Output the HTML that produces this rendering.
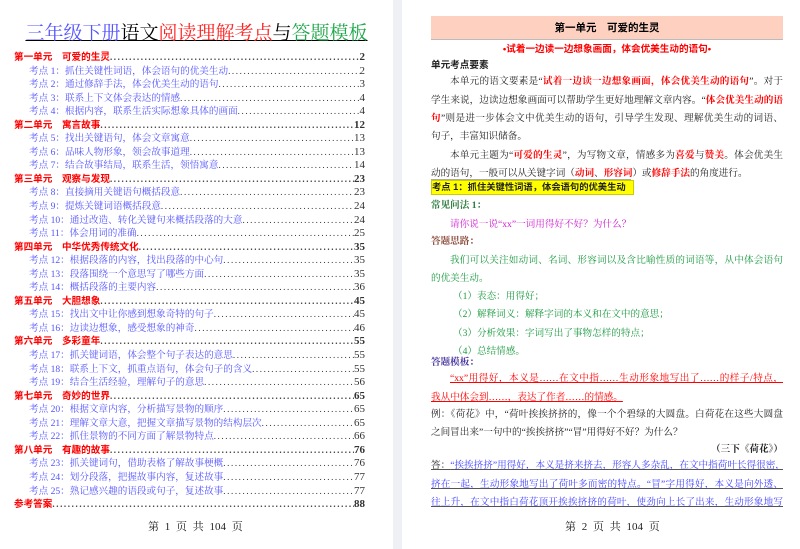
<!DOCTYPE html>
<html><head><meta charset="utf-8">
<style>
*{margin:0;padding:0;box-sizing:border-box}
body{width:800px;height:549px;overflow:hidden;background:#eef0f5;font-family:"Liberation Serif","Noto Serif CJK SC","Noto Sans CJK SC",serif;position:relative}
.pg{position:absolute;top:0;height:549px;background:#fff}
#p1{left:0;width:393px}
#p2{left:402px;width:398px}
.title{position:absolute;top:22px;left:0;width:393px;text-align:center;font-size:19px;line-height:24px;white-space:nowrap;text-decoration:underline;text-decoration-thickness:1px}
.toc{position:absolute;left:14px;width:351px;font-size:9.6px;line-height:13.55px;top:51px}
.row{display:flex;height:13.55px;white-space:nowrap;overflow:hidden}
.row .l{flex:none}
.row .d{flex:1;overflow:hidden;color:#333;letter-spacing:1.6px;font-size:9px}
.row .n{flex:none;color:#333;font-family:"Liberation Serif",serif;font-size:11px}
.u{color:#f00;font-weight:bold}
.u .l{font-family:"Liberation Sans","Noto Sans CJK SC",sans-serif}
.t{padding-left:15px;color:#55f}
.foot{position:absolute;top:518px;font-size:11px;color:#222;word-spacing:3px}
.ln{position:absolute;left:29px;width:352px;font-size:9.6px;line-height:14px;white-space:nowrap;color:#222;overflow:hidden}
.j{text-align:justify;text-align-last:justify}
.r{color:#f00}
.b{font-weight:bold}
.g{color:#1a9a40}
</style></head><body>
<div class="pg" id="p1">
<div class="title"><span style="color:#55f">三年级下册</span><span style="color:#000">语文</span><span style="color:#f22">阅读理解考点</span><span style="color:#000">与</span><span style="color:#1fa84a">答题模板</span></div>
<div class="toc">
<div class="row u"><span class="l">第一单元　可爱的生灵</span><span class="d">..........................................................................................................</span><span class="n">2</span></div>
<div class="row t"><span class="l">考点 1：抓住关键性词语，体会语句的优美生动</span><span class="d">..........................................................................................</span><span class="n">2</span></div>
<div class="row t"><span class="l">考点 2：通过修辞手法，体会优美生动的语句</span><span class="d">..........................................................................................</span><span class="n">3</span></div>
<div class="row t"><span class="l">考点 3：联系上下文体会表达的情感</span><span class="d">..........................................................................................</span><span class="n">4</span></div>
<div class="row t"><span class="l">考点 4：根据内容，联系生活实际想象具体的画面</span><span class="d">..........................................................................................</span><span class="n">4</span></div>
<div class="row u"><span class="l">第二单元　寓言故事</span><span class="d">..........................................................................................................</span><span class="n">12</span></div>
<div class="row t"><span class="l">考点 5：找出关键语句，体会文章寓意</span><span class="d">..........................................................................................</span><span class="n">13</span></div>
<div class="row t"><span class="l">考点 6：品味人物形象，领会故事道理</span><span class="d">..........................................................................................</span><span class="n">13</span></div>
<div class="row t"><span class="l">考点 7：结合故事结局，联系生活，领悟寓意</span><span class="d">..........................................................................................</span><span class="n">14</span></div>
<div class="row u"><span class="l">第三单元　观察与发现</span><span class="d">..........................................................................................................</span><span class="n">23</span></div>
<div class="row t"><span class="l">考点 8：直接摘用关键语句概括段意</span><span class="d">..........................................................................................</span><span class="n">23</span></div>
<div class="row t"><span class="l">考点 9：提炼关键词语概括段意</span><span class="d">..........................................................................................</span><span class="n">24</span></div>
<div class="row t"><span class="l">考点 10：通过改造、转化关键句来概括段落的大意</span><span class="d">..........................................................................................</span><span class="n">24</span></div>
<div class="row t"><span class="l">考点 11：体会用词的准确</span><span class="d">..........................................................................................</span><span class="n">25</span></div>
<div class="row u"><span class="l">第四单元　中华优秀传统文化</span><span class="d">..........................................................................................................</span><span class="n">35</span></div>
<div class="row t"><span class="l">考点 12：根据段落的内容，找出段落的中心句</span><span class="d">..........................................................................................</span><span class="n">35</span></div>
<div class="row t"><span class="l">考点 13：段落围绕一个意思写了哪些方面</span><span class="d">..........................................................................................</span><span class="n">35</span></div>
<div class="row t"><span class="l">考点 14：概括段落的主要内容</span><span class="d">..........................................................................................</span><span class="n">36</span></div>
<div class="row u"><span class="l">第五单元　大胆想象</span><span class="d">..........................................................................................................</span><span class="n">45</span></div>
<div class="row t"><span class="l">考点 15：找出文中让你感到想象奇特的句子</span><span class="d">..........................................................................................</span><span class="n">45</span></div>
<div class="row t"><span class="l">考点 16：边读边想象，感受想象的神奇</span><span class="d">..........................................................................................</span><span class="n">46</span></div>
<div class="row u"><span class="l">第六单元　多彩童年</span><span class="d">..........................................................................................................</span><span class="n">55</span></div>
<div class="row t"><span class="l">考点 17：抓关键词语，体会整个句子表达的意思</span><span class="d">..........................................................................................</span><span class="n">55</span></div>
<div class="row t"><span class="l">考点 18：联系上下文，抓重点语句，体会句子的含义</span><span class="d">..........................................................................................</span><span class="n">55</span></div>
<div class="row t"><span class="l">考点 19：结合生活经验，理解句子的意思</span><span class="d">..........................................................................................</span><span class="n">56</span></div>
<div class="row u"><span class="l">第七单元　奇妙的世界</span><span class="d">..........................................................................................................</span><span class="n">65</span></div>
<div class="row t"><span class="l">考点 20：根据文章内容，分析描写景物的顺序</span><span class="d">..........................................................................................</span><span class="n">65</span></div>
<div class="row t"><span class="l">考点 21：理解文章大意，把握文章描写景物的结构层次</span><span class="d">..........................................................................................</span><span class="n">65</span></div>
<div class="row t"><span class="l">考点 22：抓住景物的不同方面了解景物特点</span><span class="d">..........................................................................................</span><span class="n">66</span></div>
<div class="row u"><span class="l">第八单元　有趣的故事</span><span class="d">..........................................................................................................</span><span class="n">76</span></div>
<div class="row t"><span class="l">考点 23：抓关键词句，借助表格了解故事梗概</span><span class="d">..........................................................................................</span><span class="n">76</span></div>
<div class="row t"><span class="l">考点 24：划分段落，把握故事内容，复述故事</span><span class="d">..........................................................................................</span><span class="n">77</span></div>
<div class="row t"><span class="l">考点 25：熟记感兴趣的语段或句子，复述故事</span><span class="d">..........................................................................................</span><span class="n">77</span></div>
<div class="row u"><span class="l">参考答案</span><span class="d">..........................................................................................................</span><span class="n">88</span></div>
</div>
<div class="foot" style="left:148px">第 1 页 共 104 页</div>
</div>

<div class="pg" id="p2">
<div style="position:absolute;left:29px;top:16px;width:352px;height:24px;background:#fdd0c0;border-bottom:1px solid #bbb;text-align:center;font-size:10.5px;line-height:24px;font-weight:bold;font-family:'Liberation Sans','Noto Sans CJK SC',sans-serif">第一单元　可爱的生灵</div>
<div class="ln r b" style="top:43px;text-align:center;font-family:'Liberation Sans','Noto Sans CJK SC',sans-serif">•试着一边读一边想象画面，体会优美生动的语句•</div>
<div class="ln b" style="top:59px;font-family:'Liberation Sans','Noto Sans CJK SC',sans-serif">单元考点要素</div>
<div class="ln j" style="top:75px;padding-left:19px">本单元的语文要素是“<span class="r b">试着一边读一边想象画面，体会优美生动的语句</span>”。对于</div>
<div class="ln j" style="top:94px">学生来说，边读边想象画面可以帮助学生更好地理解文章内容。“<span class="r b">体会优美生动的语</span></div>
<div class="ln j" style="top:112px"><span class="r b">句</span>”则是进一步体会文中优美生动的语句，引导学生发现、理解优美生动的词语、</div>
<div class="ln" style="top:130px">句子，丰富知识储备。</div>
<div class="ln j" style="top:149px;padding-left:19px">本单元主题为“<span class="r b">可爱的生灵</span>”，为写物文章，情感多为<span class="r b">喜爱</span>与<span class="r b">赞美</span>。体会优美生</div>
<div class="ln" style="top:167px">动的语句，一般可以从关键字词（<span class="r b">动词</span>、<span class="r b">形容词</span>）或<span class="r b">修辞手法</span>的角度进行。</div>
<div style="position:absolute;left:29px;top:179px;width:200px;height:1px;background:#aaa"></div>
<div class="ln b" style="top:180px;width:203px;background:#ff0;border:1px solid #cc0;font-family:'Liberation Sans','Noto Sans CJK SC',sans-serif;line-height:13px;font-size:9.3px">考点 1：抓住关键性词语，体会语句的优美生动</div>
<div class="ln b" style="top:199px;color:#2a7a3a">常见问法 1：</div>
<div class="ln" style="top:218px;padding-left:19px;color:#d020d0">请你说一说“xx”一词用得好不好？为什么？</div>
<div class="ln b" style="top:235px;color:#8a4a3a">答题思路：</div>
<div class="ln j g" style="top:254px;padding-left:19px">我们可以关注如动词、名词、形容词以及含比喻性质的词语等，从中体会语句</div>
<div class="ln g" style="top:272px">的优美生动。</div>
<div class="ln g" style="top:290px;padding-left:22px">（1）表态：用得好；</div>
<div class="ln g" style="top:308px;padding-left:22px">（2）解释词义：解释字词的本义和在文中的意思；</div>
<div class="ln g" style="top:327px;padding-left:22px">（3）分析效果：字词写出了事物怎样的特点；</div>
<div class="ln g" style="top:345px;padding-left:22px">（4）总结情感。</div>
<div class="ln b" style="top:356px;color:#4a3aa0">答题模板：</div>
<div class="ln j r" style="top:372px;padding-left:19px;text-decoration:underline">“xx”用得好，本义是……在文中指……生动形象地写出了……的样子/特点，</div>
<div class="ln r" style="top:391px;text-decoration:underline">我从中体会到……，表达了作者……的情感。</div>
<div class="ln j" style="top:408px">例：《荷花》中，“荷叶挨挨挤挤的，像一个个碧绿的大圆盘。白荷花在这些大圆盘</div>
<div class="ln" style="top:426px">之间冒出来”一句中的“挨挨挤挤”“冒”用得好不好？为什么？</div>
<div class="ln b" style="top:443px;text-align:right">（三下《荷花》）</div>
<div class="ln j" style="top:459px;color:#44f;text-decoration:underline;text-decoration-color:#555"><span style="color:#222">答：</span>“挨挨挤挤”用得好，本义是挤来挤去，形容人多杂乱，在文中指荷叶长得很密，</div>
<div class="ln j" style="top:478px;color:#44f;text-decoration:underline;text-decoration-color:#555">挤在一起，生动形象地写出了荷叶多而密的特点。“冒”字用得好，本义是向外透、</div>
<div class="ln j" style="top:496px;color:#44f;text-decoration:underline;text-decoration-color:#555">往上升，在文中指白荷花顶开挨挨挤挤的荷叶，使劲向上长了出来，生动形象地写</div>
<div class="foot" style="left:163px">第 2 页 共 104 页</div>
</div>
</body></html>
